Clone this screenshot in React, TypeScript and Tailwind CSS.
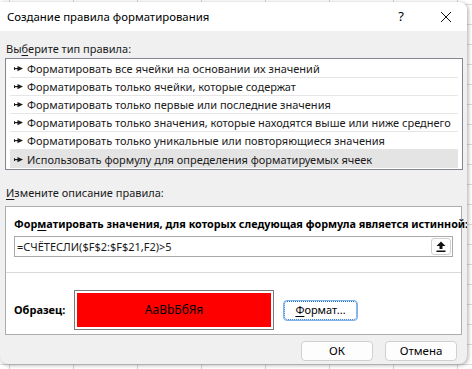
import React from "react";

const rules = [
  "Форматировать все ячейки на основании их значений",
  "Форматировать только ячейки, которые содержат",
  "Форматировать только первые или последние значения",
  "Форматировать только значения, которые находятся выше или ниже среднего",
  "Форматировать только уникальные или повторяющиеся значения",
  "Использовать формулу для определения форматируемых ячеек",
];

function RuleArrow() {
  return (
    <svg width="9" height="7" viewBox="0 0 9 7" className="shrink-0">
      <rect x="0" y="3" width="4" height="1.2" fill="#1a1a1a" />
      <rect x="0" y="2.2" width="1" height="2.8" fill="#1a1a1a" />
      <path d="M3.5 1 L9 3.6 L3.5 6.2 Z" fill="#1a1a1a" />
    </svg>
  );
}

function UpArrowIcon() {
  return (
    <svg width="10" height="11" viewBox="0 0 10 11">
      <path d="M5 0.5 L9.5 5 L6.5 5 L6.5 8 L3.5 8 L3.5 5 L0.5 5 Z" fill="#111" />
      <rect x="0.5" y="9.5" width="9" height="1.5" fill="#111" />
    </svg>
  );
}

export default function App() {
  return (
    <div
      className="relative w-[472px] h-[369px] overflow-hidden bg-white bg-[linear-gradient(to_right,#d6d6d6_1px,transparent_1px),linear-gradient(to_bottom,#dcdcdc_1px,transparent_1px)] bg-[size:64px_20px] bg-[position:9px_4px] pt-[2px]"
      style={{ fontFamily: '"Noto Sans", "Open Sans", sans-serif' }}
    >
      <div className="flex flex-col w-[467px] h-[362px] rounded-tr-lg rounded-b-lg bg-[#f0f0f0] shadow-[1px_1px_4px_rgba(0,0,0,0.35)] overflow-hidden text-[11px] text-[#1a1a1a]">
        {/* title bar */}
        <div className="flex items-center h-[29px] bg-white shrink-0 pl-[7px]">
          <span className="text-[11.4px] text-black">Создание правила форматирования</span>
          <span className="ml-auto mr-[36px] text-[13px] text-black">?</span>
          <svg width="12" height="12" viewBox="0 0 12 12" className="mr-[15px]">
            <path d="M1 1 L11 11 M11 1 L1 11" stroke="#111" strokeWidth="1" />
          </svg>
        </div>

        <div className="flex flex-col px-[5px] pt-[10px]">
          <div className="pl-[1px] leading-[16px]">
            Вы<span className="underline underline-offset-2">б</span>ерите тип правила:
          </div>
          <div className="mt-[1px] w-[458px] border border-[#828790] bg-white px-[4px] py-[1px]">
            {rules.map((r, i) => (
              <div
                key={r}
                className={
                  "flex items-center gap-[4px] h-[18px] pl-[4px] " +
                  (i === rules.length - 1
                    ? "bg-[#e4e4e4]"
                    : "border-b border-[#e6e6e6]")
                }
              >
                <RuleArrow />
                <span className="whitespace-nowrap leading-none">{r}</span>
              </div>
            ))}
          </div>

          <div className="mt-[15px] pl-[1px] leading-[16px]">
            <span className="underline underline-offset-2">И</span>змените описание правила:
          </div>

          <div className="mt-[5px] w-[457px] h-[129px] border border-[#adadad] bg-white flex flex-col">
            <div className="px-[8px] pt-[9px] font-bold text-[10.8px] whitespace-nowrap leading-[16px] text-black">
              Фор<span className="underline underline-offset-2">м</span>атировать значения, для которых следующая формула является истинной:
            </div>
            <div className="mx-[8px] mt-[4px] h-[21px] border border-[#a9a9a9] bg-white flex items-center pl-[2px] pr-[1px]">
              <span className="leading-none">=СЧЁТЕСЛИ($F$2:$F$21,F2)&gt;5</span>
              <div className="ml-auto w-[20px] h-[17px] rounded-[3px] border border-[#cfcfcf] bg-white flex items-center justify-center">
                <UpArrowIcon />
              </div>
            </div>
            <div className="mt-[15px] border-t border-[#d9d9d9]" />
            <div className="flex items-center pl-[8px] mt-[17px]">
              <span className="w-[60px] font-bold text-[11px] text-black">Образец:</span>
              <div className="w-[200px] h-[40px] border border-[#7a7a7a] bg-white p-[2px]">
                <div className="w-full h-full bg-[#ff0000] flex items-center justify-center text-[12px] text-black">
                  AaBbБбЯя
                </div>
              </div>
              <div className="ml-[10px] w-[73px] h-[19px] rounded-[3px] border border-dotted border-[#1f6fcf] outline outline-1 outline-[#7fb0e6] bg-white flex items-center justify-center text-black">
                <span className="underline underline-offset-2">Ф</span>ормат...
              </div>
            </div>
          </div>
        </div>

        <div className="flex justify-end gap-[12px] pr-[10px] mt-[6px]">
          <div className="w-[72px] h-[20px] rounded-[4px] border border-[#d0d0d0] bg-[#fdfdfd] flex items-center justify-center text-[11.5px] text-black">
            ОК
          </div>
          <div className="w-[72px] h-[20px] rounded-[4px] border border-[#d0d0d0] bg-[#fdfdfd] flex items-center justify-center text-[11.5px] text-black">
            Отмена
          </div>
        </div>
      </div>
    </div>
  );
}
